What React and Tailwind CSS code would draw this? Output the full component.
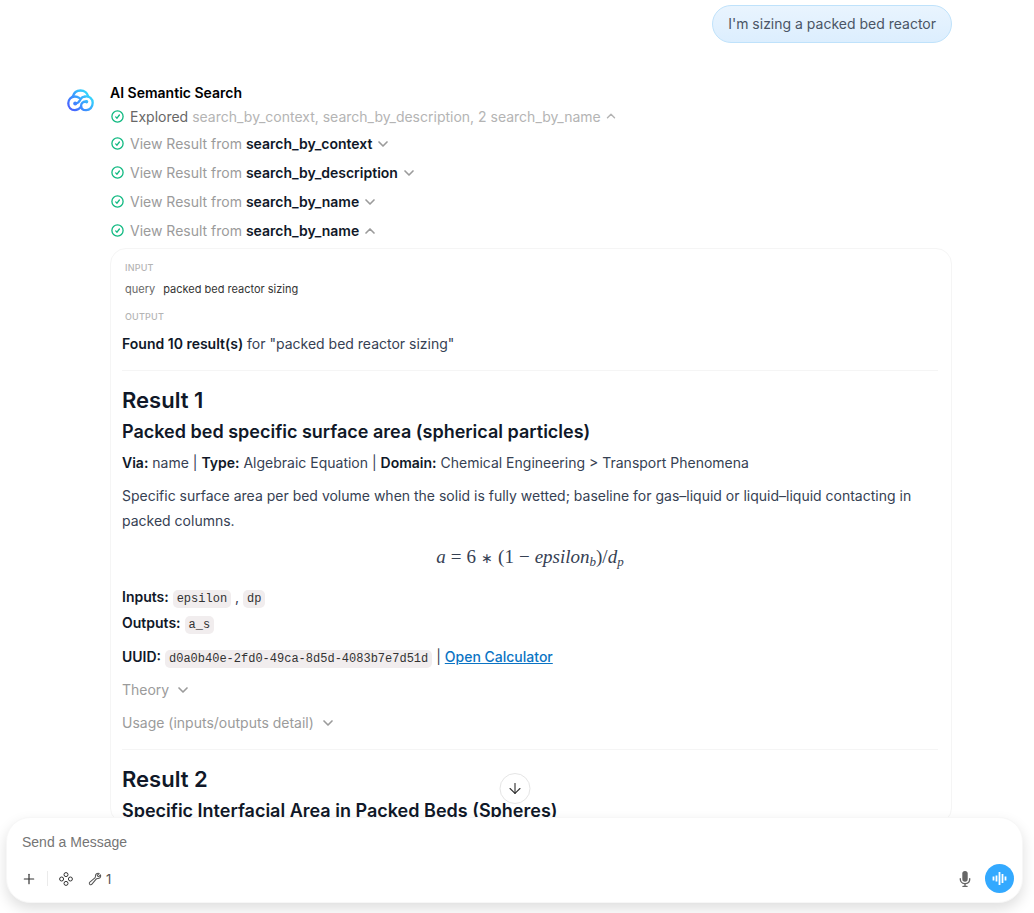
import React, { useState } from 'react';
import { ArrowDown, ChevronDown, ChevronUp, Plus } from 'lucide-react';

const TOOLS = [
  { id: 1, name: 'search_by_context', open: false },
  { id: 2, name: 'search_by_description', open: false },
  { id: 3, name: 'search_by_name', open: false },
  { id: 4, name: 'search_by_name', open: true },
];

const Logo = () => (
  <svg viewBox="0 0 27 23" fill="none" className="w-[27px] h-[23px]" aria-hidden="true">
    <defs>
      <linearGradient id="cloud" x1="3" y1="21" x2="22" y2="3" gradientUnits="userSpaceOnUse">
        <stop stopColor="#4a5cff" />
        <stop offset="0.5" stopColor="#3a9bff" />
        <stop offset="1" stopColor="#35e0fb" />
      </linearGradient>
    </defs>
    <g stroke="url(#cloud)" strokeWidth="2.3" strokeLinecap="round" strokeLinejoin="round">
      <path d="M5.800 7.600C6.800 3.900 9.900 1.500 13.500 1.500c3.900 0 7 2.600 7.800 6.100" />
      <path d="M17.800 7.600c4.700-.9 7.900 2 7.900 6.200 0 4.300-2.900 7.400-6.600 7.400-3 0-5-1.800-5-4.500 0-2.400 1.900-4.200 5.200-4.200" />
      <path d="M8.400 14.400c3.400 0 4-2.100 5.200-4.200 1-1.700 2.400-2.600 4.200-2.600M12.200 8.900C10.900 7.900 9.400 7.500 7.800 7.500c-3.800 0-6.500 3-6.500 6.800 0 3.900 2.700 6.900 6.600 6.900 2.600 0 4.500-1.300 6.200-3.600" />
    </g>
    <circle cx="8.200" cy="14.400" r="2" fill="url(#cloud)" />
    <circle cx="19.600" cy="12.800" r="1.700" fill="url(#cloud)" />
  </svg>
);

const DoneIcon = () => (
  <svg viewBox="0 0 13 13" fill="none" stroke="#10b981" strokeWidth="1.300" strokeLinecap="round" strokeLinejoin="round" className="w-[13px] h-[13px] shrink-0" aria-hidden="true">
    <circle cx="6.500" cy="6.500" r="5.600" />
    <path d="M4.700 6.900l1.300 1.300 2.400-3.200" />
  </svg>
);

const Code = ({ children }) => (
  <code className="rounded-[5px] bg-[#f1edee] px-1 py-[2px] font-['Liberation_Mono'] text-[12px] leading-none text-[#333]">{children}</code>
);

const B = ({ children }) => <strong className="font-semibold text-[#101828]">{children}</strong>;

const Formula = () => (
  <div className="mt-[11px] flex items-baseline justify-center gap-[5px] font-['Liberation_Serif'] text-[19px] leading-[25px]">
    <i>a</i>
    <span>=</span>
    <span>6</span>
    <span className="text-[14px]">∗</span>
    <span>(1</span>
    <span>−</span>
    <span>
      <i>epsilon</i>
      <sub className="text-[13px] leading-none"><i>b</i></sub>
      )/<i>d</i>
      <sub className="text-[13px] leading-none"><i>p</i></sub>
    </span>
  </div>
);

const ResultHeading = ({ index, title }) => (
  <>
    <hr className="border-[#f5f5f5]" />
    <h2 className="mt-[15px] text-[22px] font-semibold leading-7 text-[#101828]">Result {index}</h2>
    <h3 className="mt-[5px] text-[18px] font-semibold leading-[25px] text-[#101828]">{title}</h3>
  </>
);

const Collapsed = ({ label }) => (
  <button type="button" className="mt-2 flex items-center gap-[6px] leading-[25px] text-[#9b9b9b]">
    {label}
    <ChevronDown size={16} strokeWidth={2.500} />
  </button>
);

const ToolRow = ({ name, open }) => {
  const Chevron = open ? ChevronUp : ChevronDown;
  return (
    <button type="button" className="flex h-[29px] items-center gap-[6px] pl-px text-[#9b9b9b]">
      <DoneIcon />
      <span>View Result from <strong className="font-semibold text-[#101828]">{name}</strong></span>
      <Chevron size={16} strokeWidth={2.500} className="-ml-[3px]" />
    </button>
  );
};

const ToolOutput = () => (
  <div className="mt-[3px] rounded-2xl border border-[#f5f5f5] pl-[11px] pr-[13px] pt-[11px]">
    <div className="px-[3px]">
      <h4 className="text-[9px] font-medium uppercase leading-[15px] tracking-wide text-[#b4b4b4]">Input</h4>
      <p className="mt-[6px] flex gap-2 text-[11px] leading-[17px] text-[#333]">
        <span className="text-[#676767]">query</span>
        <span>packed bed reactor sizing</span>
      </p>
      <h4 className="mt-[11px] text-[9px] font-medium uppercase leading-[15px] tracking-wide text-[#b4b4b4]">Output</h4>
    </div>
    <p className="mb-[14px] mt-[7px]"><B>Found 10 result(s)</B> for "packed bed reactor sizing"</p>

    <ResultHeading index={1} title="Packed bed specific surface area (spherical particles)" />
    <p className="mt-[6px]">
      <B>Via:</B> name | <B>Type:</B> Algebraic Equation | <B>Domain:</B> Chemical Engineering &gt; Transport Phenomena
    </p>
    <p className="mt-2">
      Specific surface area per bed volume when the solid is fully wetted; baseline for gas–liquid or liquid–liquid contacting in packed columns.
    </p>
    <Formula />
    <p className="mt-[13px] leading-[26px]">
      <B>Inputs:</B> <Code>epsilon</Code> , <Code>dp</Code>
      <br />
      <B>Outputs:</B> <Code>a_s</Code>
    </p>
    <p className="mt-2">
      <B>UUID:</B> <Code>d0a0b40e-2fd0-49ca-8d5d-4083b7e7d51d</Code> |{' '}
      <a href="#calculator" className="font-medium text-[#0b74c4] underline">Open Calculator</a>
    </p>
    <Collapsed label="Theory" />
    <Collapsed label="Usage (inputs/outputs detail)" />
    <div className="mt-[14px]">
      <ResultHeading index={2} title="Specific Interfacial Area in Packed Beds (Spheres)" />
    </div>
  </div>
);

const Composer = () => {
  const [text, setText] = useState('');

  return (
    <form className="relative mb-[10px] ml-[6px] mr-[11px] rounded-3xl border border-[#f7f7f7] bg-white px-[15px] pb-[9px] pt-3 shadow-[0_6px_14px_rgba(0,0,0,0.13)]">
      <button type="button" aria-label="Scroll to bottom" className="absolute -top-[45px] left-1/2 flex size-[31px] -translate-x-1/2 items-center justify-center rounded-full border border-[#e5e5e5] bg-white text-[#333]">
        <ArrowDown size={17} strokeWidth={1.600} />
      </button>
      <input
        type="text"
        aria-label="Message"
        value={text}
        onChange={e => setText(e.target.value)}
        placeholder="Send a Message"
        className="block h-6 w-full font-['Liberation_Sans'] text-[14px] outline-none placeholder:text-[#757575]"
      />
      <div className="mt-[10px] flex items-center text-[#333]">
        <button type="button" aria-label="Add" className="flex size-[14px] items-center justify-center">
          <Plus size={16} strokeWidth={1.800} className="shrink-0" />
        </button>
        <span className="ml-[11px] h-[15px] w-px bg-[#ebebeb]" />
        <button type="button" aria-label="Integrations" className="ml-[11px]">
          <svg viewBox="0 0 14 14" fill="none" stroke="currentColor" className="size-[14px]">
            <circle cx="7" cy="2.600" r="2" />
            <circle cx="2.600" cy="7" r="2" />
            <circle cx="11.400" cy="7" r="2" />
            <circle cx="7" cy="11.400" r="2" />
          </svg>
        </button>
        <button type="button" aria-label="Tools" className="ml-[15px] flex items-center gap-1 text-[13px] leading-5 text-[#555]">
          <svg viewBox="0 0 24 24" fill="none" stroke="currentColor" strokeWidth="1.800" strokeLinecap="round" strokeLinejoin="round" className="size-[14px]">
            <path d="M21.750 6.750a4.500 4.500 0 0 1-4.884 4.484c-1.076-.091-2.264.071-2.950.904l-7.152 8.684a2.548 2.548 0 1 1-3.586-3.586l8.684-7.152c.833-.686.995-1.874.904-2.950a4.500 4.500 0 0 1 6.336-4.486l-3.276 3.276a3.004 3.004 0 0 0 2.250 2.250l3.276-3.276c.256.565.398 1.192.398 1.852Z" />
          </svg>
          1
        </button>
        <button type="button" aria-label="Dictate" className="ml-auto text-[#666]">
          <svg viewBox="0 0 20 20" fill="currentColor" className="size-[18px]">
            <path d="M7 4a3 3 0 0 1 6 0v6a3 3 0 1 1-6 0V4Z" />
            <path d="M5.500 9.643a.75.75 0 0 0-1.500 0V10c0 3.060 2.290 5.585 5.250 5.954V17.500h-1.500a.75.75 0 0 0 0 1.500h4.500a.75.75 0 0 0 0-1.500h-1.500v-1.546A6.001 6.001 0 0 0 16 10v-.357a.75.75 0 0 0-1.500 0V10a4.500 4.500 0 0 1-9 0v-.357Z" />
          </svg>
        </button>
        <button type="button" aria-label="Voice mode" className="-mr-[7px] ml-[11px] flex size-[29px] items-center justify-center rounded-full bg-[#33a9ff] text-white">
          <svg viewBox="0 0 15 15" stroke="currentColor" strokeWidth="1.800" className="size-[15px]">
            <path d="M1.500 5.500v4M4.500 4.500v6M7.500 1v13M10.500 3v9M13.500 5.500v4" />
          </svg>
        </button>
      </div>
    </form>
  );
};

export default function App() {
  return (
    <div className="flex h-screen flex-col overflow-hidden bg-white font-['Inter',sans-serif] text-[14px] leading-[25px] text-[#364153]">
      <main className="min-h-0 flex-1 overflow-hidden pr-[15px]">
        <div className="mx-auto max-w-[885px] pt-[5px]">
          <div className="flex justify-end">
            <p className="rounded-full border border-[#bfe2fb] bg-linear-to-b from-[#e9f4fe] to-[#dceefe] px-[15px] py-[6px] leading-6 text-[#4a5565]">
              I'm sizing a packed bed reactor
            </p>
          </div>

          <div className="mt-[38px] flex gap-4">
            <div className="w-[27px] shrink-0 pt-2">
              <Logo />
            </div>
            <div className="min-w-0 flex-1">
              <h1 className="font-semibold leading-6 text-black">AI Semantic Search</h1>
              <button type="button" className="mb-[2px] flex h-[22px] items-center gap-[6px] pl-px text-[#b4b4b4]">
                <DoneIcon />
                <span><span className="text-[#676767]">Explored</span> search_by_context, search_by_description, 2 search_by_name</span>
                <ChevronUp size={14} strokeWidth={2.500} className="-ml-[3px]" />
              </button>
              {TOOLS.map(t => <ToolRow key={t.id} name={t.name} open={t.open} />)}
              <ToolOutput />
            </div>
          </div>
        </div>
      </main>
      <Composer />
    </div>
  );
}
